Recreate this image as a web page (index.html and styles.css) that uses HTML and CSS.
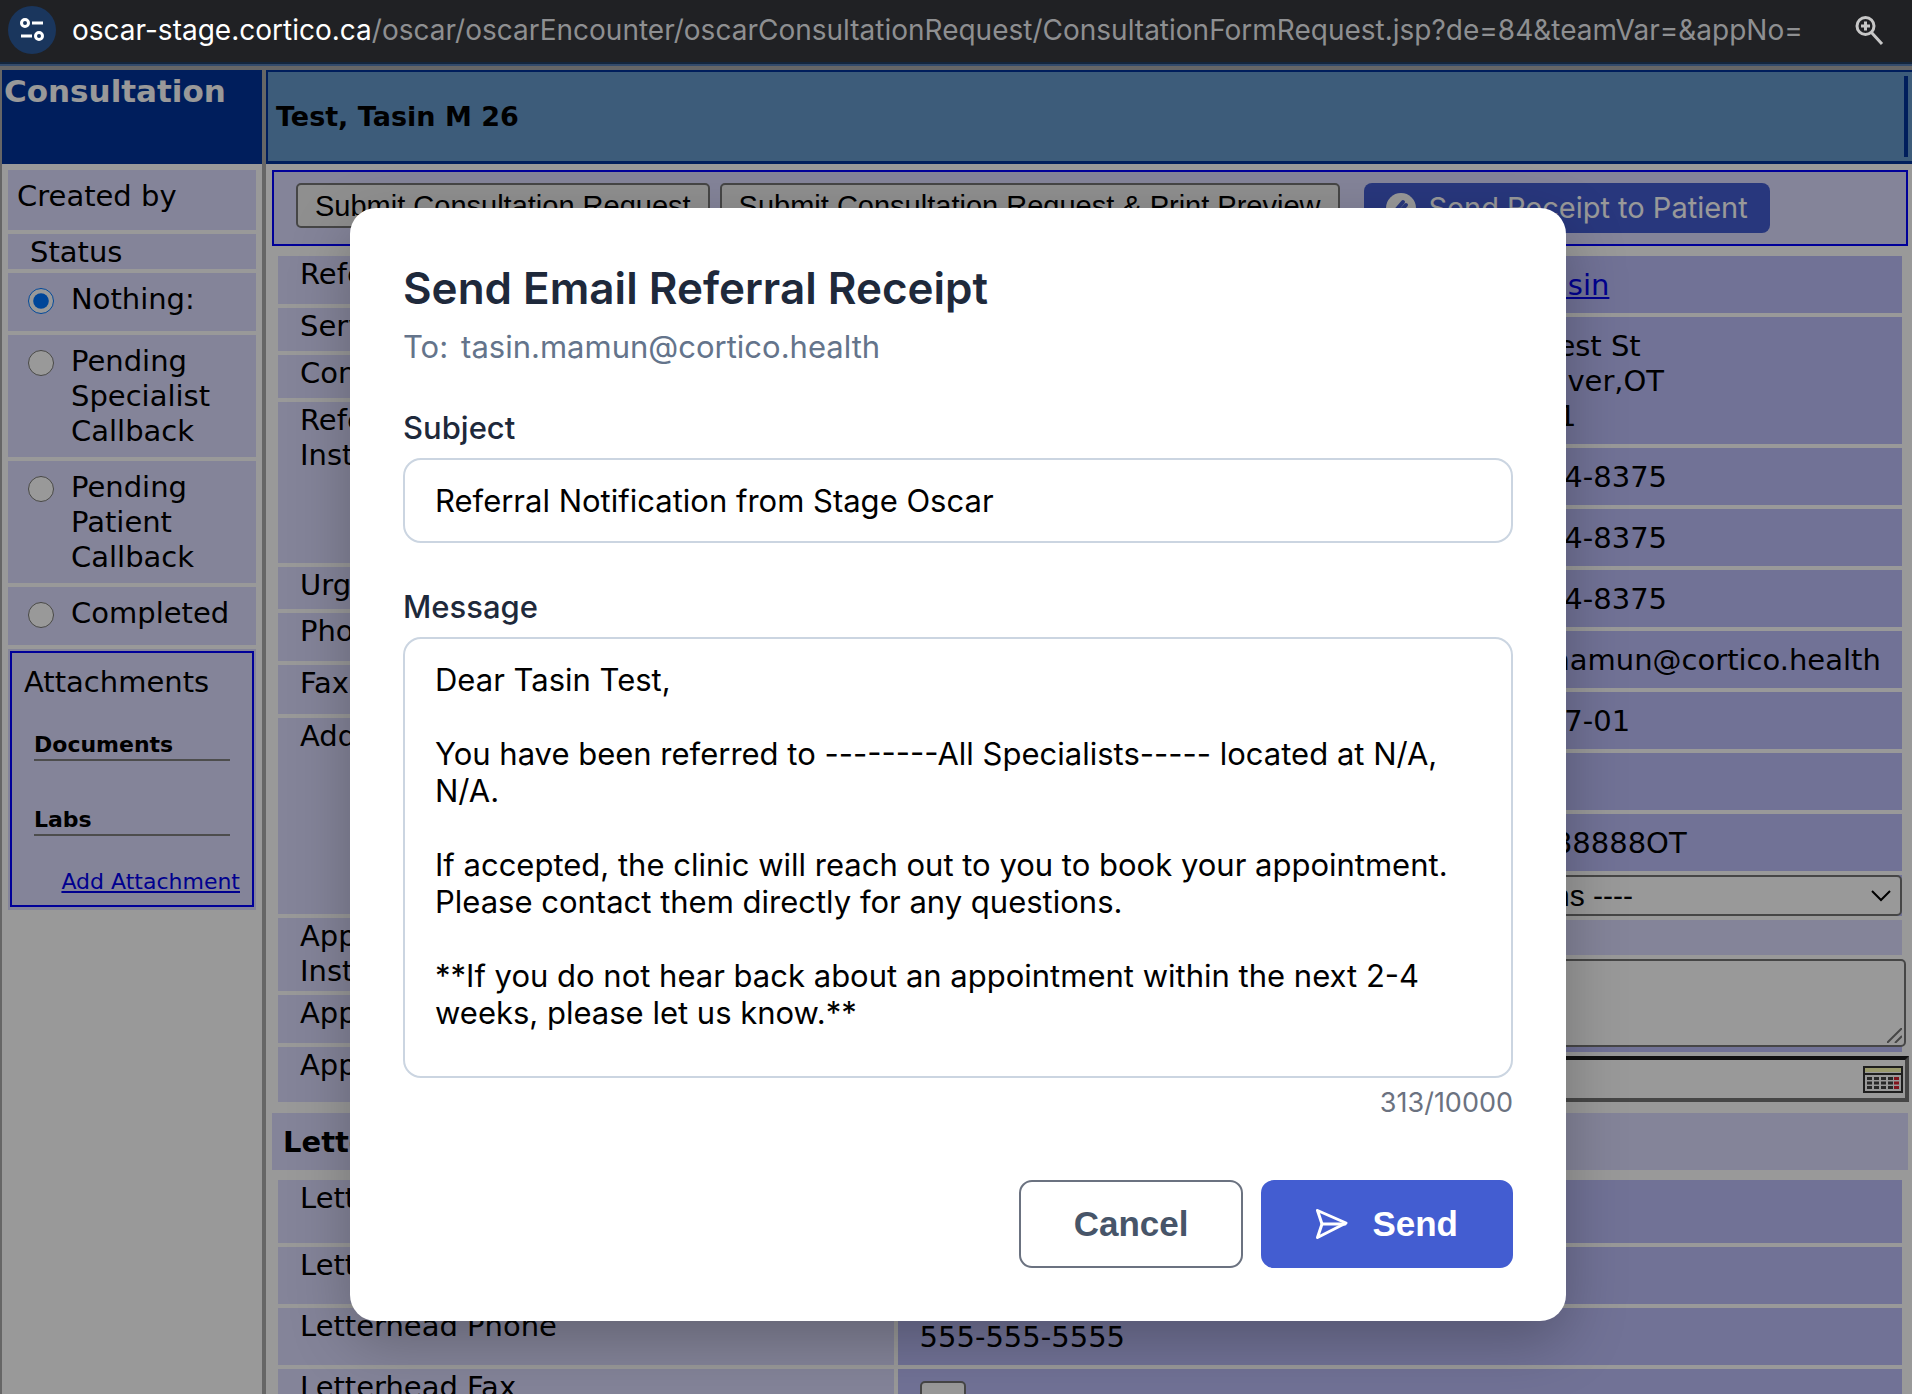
FILE: index.html
```html
<!DOCTYPE html>
<html lang="en">
<head>
<meta charset="utf-8">
<meta name="viewport" content="width=device-width, initial-scale=1">
<title>Consultation</title>
<link rel="stylesheet" href="styles.css">
</head>
<body>
<header class="urlbar">
  <span class="site-info">
    <svg width="48" height="48" viewBox="0 0 48 48" fill="none" stroke="#fff" stroke-width="3" stroke-linecap="butt" aria-hidden="true">
      <circle cx="17" cy="17" r="3.5"/><path d="M24 17h11M13 30h11"/><circle cx="31" cy="30" r="3.5"/>
    </svg>
  </span>
  <p class="url"><span class="host">oscar-stage.cortico.ca</span>/oscar/oscarEncounter/oscarConsultationRequest/ConsultationFormRequest.jsp?de=84&amp;teamVar=&amp;appNo=</p>
  <svg class="zoom-icon" width="30" height="32" viewBox="0 0 30 32" fill="none" stroke="#c7c7c7" stroke-width="3" aria-hidden="true">
    <circle cx="11.500" cy="12" r="8.500"/><path d="M17.500 18.500L28 30M11.500 7.500v9M7 12h9"/>
  </svg>
</header>

<div class="page">
  <div class="chart">
    <h1 class="brand">Consultation</h1>
    <div class="patient-bar"><h2>Test, Tasin M 26</h2></div>

    <aside class="side">
      <p class="side-item created">Created by</p>
      <p class="side-item status">Status</p>
      <label class="side-item choice"><input type="radio" name="status" checked><span>Nothing:</span></label>
      <label class="side-item choice"><input type="radio" name="status"><span>Pending Specialist Callback</span></label>
      <label class="side-item choice"><input type="radio" name="status"><span>Pending Patient Callback</span></label>
      <label class="side-item choice"><input type="radio" name="status"><span>Completed</span></label>
      <section class="attachments">
        <div class="attachments-box">
          <p class="attachments-title">Attachments</p>
          <h3>Documents</h3>
          <h3>Labs</h3>
          <a href="#">Add Attachment</a>
        </div>
      </section>
    </aside>

    <main class="main">
      <div class="toolbar">
        <button type="button" class="native">Submit Consultation Request</button>
        <button type="button" class="native">Submit Consultation Request &amp; Print Preview</button>
        <button type="button" class="receipt">
          <svg width="30" height="30" viewBox="0 0 30 30" aria-hidden="true"><circle cx="15" cy="15" r="15" fill="#fff"/><path d="M11 16l6-7M12 21l8-9" stroke="#435dd1" stroke-width="4" stroke-linecap="round"/></svg>
          Send Receipt to Patient
        </button>
      </div>

      <div class="columns">
        <table class="form-table request">
          <tbody>
            <tr class="h48"><th>Referral Date:</th><td></td></tr>
            <tr class="h43"><th>Service:</th><td></td></tr>
            <tr class="h43"><th>Consultant:</th><td></td></tr>
            <tr class="h161"><th>Referrer Instructions:</th><td></td></tr>
            <tr class="h42"><th>Urgency:</th><td></td></tr>
            <tr class="h48"><th>Phone:</th><td></td></tr>
            <tr class="h49"><th>Fax:</th><td></td></tr>
            <tr class="h196"><th>Address:</th><td></td></tr>
            <tr class="h73"><th>Appointment Instructions:</th><td></td></tr>
            <tr class="h48"><th>Appointment:</th><td></td></tr>
            <tr class="h55"><th>Appointment:</th><td></td></tr>
          </tbody>
        </table>
        <table class="form-table demographics">
          <tbody>
            <tr><th>Patient:</th><td><a href="#">Test, Tasin</a></td></tr>
            <tr><th>Address:</th><td>1234 Test St<br>Vancouver,OT<br>V1V1V1</td></tr>
            <tr><th>Phone:</th><td>604-444-8375</td></tr>
            <tr><th>Work Phone:</th><td>604-444-8375</td></tr>
            <tr><th>Cell Phone:</th><td>604-444-8375</td></tr>
            <tr><th>Email:</th><td>tasin.mamun@cortico.health</td></tr>
            <tr><th>Birthdate:</th><td>1998-07-01</td></tr>
            <tr><th>Sex:</th><td></td></tr>
            <tr><th>Health Card:</th><td>8888888888OT</td></tr>
            <tr class="control-row"><th><label for="team">Team:</label></th><td>
              <div class="select-wrap">
                <select id="team"><option>---- Teams ----</option></select>
                <svg width="20" height="12" viewBox="0 0 20 12" fill="none" stroke="#000" stroke-width="2" aria-hidden="true"><path d="M1 1l9 9 9-9"/></svg>
              </div>
            </td></tr>
            <tr class="notes-label"><th colspan="2"><label for="notes">Appointment Notes:</label></th></tr>
            <tr class="notes-row"><td colspan="2">
              <div class="notes-wrap">
                <textarea id="notes"></textarea>
                <svg width="15" height="15" viewBox="0 0 15 15" fill="none" stroke="#767676" stroke-width="2" aria-hidden="true"><path d="M0 15L15 0M8 15l7-7"/></svg>
              </div>
            </td></tr>
            <tr class="date-row"><td colspan="2">
              <div class="date-field">
                <input type="text" aria-label="Last follow-up date">
                <svg width="40" height="27" viewBox="0 0 40 27" aria-hidden="true">
                  <rect x="1" y="1" width="38" height="25" fill="#fff" stroke="#333" stroke-width="2"/>
                  <path d="M2 4h36" stroke="#ffffb4" stroke-width="4"/>
                  <path d="M2 8h36" stroke="#333" stroke-width="2"/>
                  <path d="M4 12.500h26M4 17h26M4 21.500h26" stroke="#444" stroke-width="3" stroke-dasharray="5 2"/>
                  <path d="M31 12.500h5M31 17h5M31 21.500h5" stroke="#d8202f" stroke-width="3"/>
                </svg>
              </div>
            </td></tr>
          </tbody>
        </table>
      </div>

      <h2 class="section-title">Letterhead</h2>

      <table class="form-table letterhead">
        <tbody>
          <tr class="h63"><th>Letterhead Name</th><td></td></tr>
          <tr><th>Letterhead Address</th><td></td></tr>
          <tr><th>Letterhead Phone</th><td>555-555-5555</td></tr>
          <tr><th>Letterhead Fax</th><td><button type="button" class="fax" aria-label="Letterhead fax"></button></td></tr>
        </tbody>
      </table>
    </main>
  </div>

  <div class="overlay">
    <form class="modal" role="dialog" aria-labelledby="modal-title">
      <h2 id="modal-title">Send Email Referral Receipt</h2>
      <p class="to"><span>To:</span><span>tasin.mamun@cortico.health</span></p>
      <label for="subject">Subject</label>
      <input id="subject" type="text" value="Referral Notification from Stage Oscar">
      <label for="message">Message</label>
      <textarea id="message" rows="10">Dear Tasin Test,

You have been referred to --------All Specialists----- located at N/A, N/A.

If accepted, the clinic will reach out to you to book your appointment. Please contact them directly for any questions.

**If you do not hear back about an appointment within the next 2-4 weeks, please let us know.**</textarea>
      <p class="counter">313/10000</p>
      <div class="actions">
        <button type="button" class="cancel">Cancel</button>
        <button type="submit" class="send">
          <svg width="32" height="30" viewBox="0 0 32 30" fill="none" stroke="#fff" stroke-width="3" stroke-linejoin="round" stroke-linecap="round" aria-hidden="true"><path d="M1.500 1.500L30 14 1.500 28.500 6 15z"/><path d="M6 15h23"/></svg>
          Send
        </button>
      </div>
    </form>
  </div>
</div>
</body>
</html>
```
FILE: styles.css
```css
* { box-sizing: border-box; }

body {
  margin: 0;
  height: 100vh;
  display: flex;
  flex-direction: column;
  overflow: hidden;
  background: #fff;
  font: 29px/35px "DejaVu Sans", Verdana, sans-serif;
  color: #000;
}

h1, h2, h3, p { margin: 0; }
a { color: #0000ee; }

/* address bar */
.urlbar {
  flex: none;
  display: flex;
  align-items: center;
  height: 64px;
  padding: 0 28px 2px 8px;
  border-bottom: 2px solid #14263d;
  background: #202124;
}
.site-info {
  width: 48px;
  height: 48px;
  border-radius: 50%;
  background: #1a365d;
}
.url {
  flex: 1;
  padding-left: 16px;
  font: 28px/36px Inter, sans-serif;
  color: #8e8f91;
  white-space: nowrap;
}
.host { color: #fff; }

/* chart behind the dialog */
.page {
  position: relative;
  flex: 1;
  min-height: 0;
  overflow: hidden;
  border-top: 2px solid #344b6b;
}
.chart {
  display: grid;
  grid-template-columns: 260px 1fr;
  column-gap: 4px;
  padding: 4px 0 0 2px;
  background: #aaa;
}
.brand {
  padding: 3px 2px;
  background: #003399;
  color: #fff;
  font-size: 31px;
  line-height: 37px;
}
.patient-bar {
  display: flex;
  align-items: center;
  height: 94px;
  padding: 4px 4px 4px 8px;
  border: solid #003399;
  border-width: 2px 0 3px 2px;
  background: #6699cc;
}
.patient-bar h2 {
  flex: 1;
  border-right: 4px solid #003399;
  font-size: 27px;
  line-height: 81px;
}
.side, .main { background: #fff; }
.side {
  display: flex;
  flex-direction: column;
  gap: 4px;
  padding: 6px;
}
.side-item, .attachments { background: #ddddff; }
.created { height: 60px; padding: 9px; }
.status { padding: 1px 22px 0; height: 35px; }
.choice {
  display: flex;
  gap: 17px;
  padding: 8px 10px 8px 20px;
  min-height: 58px;
}
.choice span { padding-top: 1px; }
.choice input { flex: none; width: 26px; height: 26px; margin: 7px 0 0; }

.attachments { padding: 2px 2px 3px; }
.attachments-box {
  display: flex;
  flex-direction: column;
  height: 256px;
  padding: 12px;
  border: 2px solid #0000ff;
}
.attachments-title { margin-bottom: 31px; }
.attachments h3 {
  margin: 0 10px 45px;
  border-bottom: 2px solid #808080;
  font-size: 22px;
  line-height: 28px;
}
.attachments h3 + h3 { margin-bottom: 32px; }
.attachments a { align-self: flex-end; font-size: 22px; line-height: 28px; white-space: nowrap; }

.main { padding: 6px 0 0 6px; }
.toolbar {
  display: flex;
  align-items: flex-start;
  gap: 10px;
  margin-right: 4px;
  padding: 11px 22px;
  border: 2px solid #0000ff;
  background: #ddddff;
}
.native {
  height: 45px;
  padding: 0 17px;
  border: 2px solid #767676;
  border-radius: 5px;
  background: #efefef;
  font: 29px/40px "Liberation Sans", Arial, sans-serif;
  white-space: nowrap;
}
.receipt {
  display: flex;
  align-items: center;
  gap: 13px;
  height: 50px;
  margin-left: 14px;
  padding: 0 22px;
  border: 0;
  border-radius: 8px;
  background: #435dd1;
  color: #fff;
  font: 29px/36px Inter, sans-serif;
  white-space: nowrap;
}

.columns {
  display: grid;
  grid-template-columns: 538fr 1082fr;
  gap: 4px;
  align-items: start;
  padding: 6px 6px 7px 2px;
}
.form-table {
  width: 100%;
  border-spacing: 4px;
  table-layout: fixed;
}
.form-table th, .form-table td { height: 57px; padding: 0 22px; text-align: left; }
.form-table th {
  width: 38%;
  padding-top: 1px;
  background: #ddddff;
  font-weight: 400;
  vertical-align: top;
}
.form-table td { padding: 12px 22px 10px; background: #bcbffa; white-space: nowrap; }
.form-table.request th { width: 260px; }
.form-table.request td { padding: 0; }
.form-table .h42 > * { height: 42px; }
.form-table .h43 > * { height: 43px; }
.form-table .h48 > * { height: 48px; }
.form-table .h49 > * { height: 49px; }
.form-table .h55 > * { height: 55px; }
.form-table .h63 > * { height: 63px; }
.form-table .h73 > * { height: 73px; }
.form-table .h161 > * { height: 161px; }
.form-table .h196 > * { height: 196px; }
.form-table.demographics th { width: 57%; }

.form-table .control-row > * { height: 41px; padding: 0; }
.select-wrap { position: relative; }
.select-wrap svg { position: absolute; right: 11px; top: 15px; }
.select-wrap select {
  appearance: none;
  display: block;
  width: 100%;
  height: 41px;
  padding: 0 7px;
  border: 2px solid #767676;
  border-radius: 5px;
  background: #fff;
  font: 30px/35px "Liberation Sans", Arial, sans-serif;
}
.form-table .notes-label th { height: 35px; padding: 0 22px; }
.form-table .notes-row td { height: 93px; padding: 0 0 5px; }
.notes-wrap { position: relative; width: calc(100% + 4px); }
.notes-wrap svg { position: absolute; right: 4px; bottom: 4px; }
.notes-wrap textarea {
  display: block;
  width: 100%;
  height: 88px;
  border: 2px solid #767676;
  border-radius: 5px;
  resize: none;
}
.form-table .date-row td { height: 46px; padding: 0; }
.date-field {
  display: flex;
  align-items: center;
  width: calc(100% + 7px);
  height: 46px;
  padding-right: 2px;
  border: 4px solid;
  border-color: #1c1c1c #767676 #767676 #1c1c1c;
  background: #fff;
}
.date-field input { flex: 1; border: 0; outline: 0; background: none; }

.section-title {
  margin-right: 4px;
  padding: 12px 11px 10px;
  background: #ddddff;
  font-size: 29px;
  line-height: 35px;
}
.letterhead { margin: 6px 0 0 2px; width: calc(100% - 8px); }
.fax {
  display: block;
  width: 46px;
  height: 35px;
  border: 2px solid #767676;
  border-radius: 5px;
  background: #fff;
}

/* dialog */
.overlay {
  position: absolute;
  inset: 0;
  display: flex;
  justify-content: center;
  align-items: flex-start;
  padding: 142px 0 0 4px;
  background: rgba(0, 0, 0, 0.4);
}
.modal {
  display: flex;
  flex-direction: column;
  width: 64%;
  max-width: 1216px;
  padding: 53px;
  border-radius: 26px;
  background: #fff;
  box-shadow: 0 20px 60px rgba(0, 0, 0, 0.25);
  font: 31px/37px Inter, sans-serif;
  color: #1e293b;
}
.modal h2 { font-size: 44px; line-height: 54px; font-weight: 600; }
.to { display: flex; gap: 13px; margin: 13px 0 44px; color: #64748b; }
.modal label { font-weight: 500; }
.modal input, .modal textarea {
  display: block;
  width: 100%;
  margin: 12px 0 45px;
  padding: 22px 30px;
  border: 2px solid #cbd5e1;
  border-radius: 18px;
  background: #fff;
  color: #000;
  font: 31px/37px Inter, sans-serif;
  resize: none;
}
.modal textarea { height: 441px; margin-bottom: 8px; overflow: hidden; }
.counter { text-align: right; font-size: 27px; line-height: 34px; color: #6b7280; }
.actions { display: flex; justify-content: flex-end; gap: 18px; margin-top: 60px; }
.actions button {
  display: flex;
  align-items: center;
  gap: 24px;
  height: 88px;
  padding: 0 53px;
  border: 2px solid #6b7280;
  border-radius: 13px;
  background: #fff;
  color: #475569;
  font: bold 35px/40px "Liberation Sans", Arial, sans-serif;
}
.actions .send { border-color: #435dd1; background: #435dd1; color: #fff; }
```
